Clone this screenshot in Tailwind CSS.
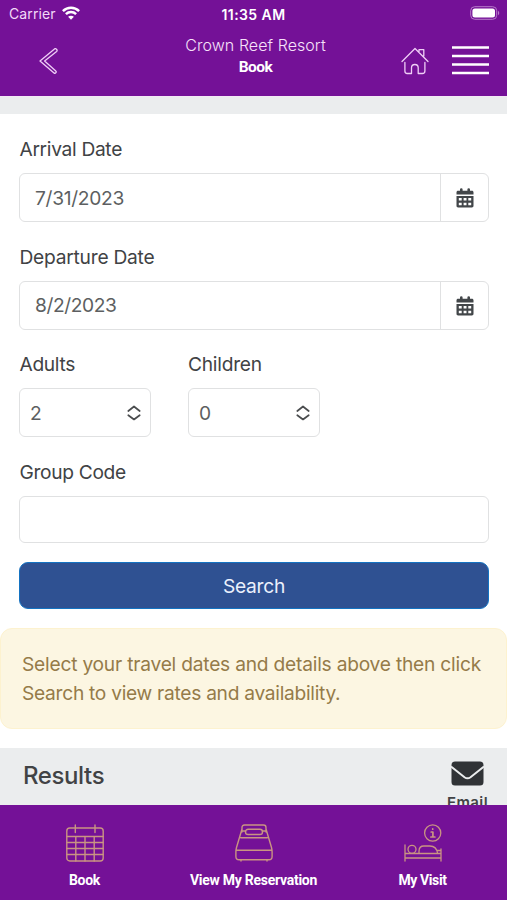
<!DOCTYPE html>
<html lang="en">
<head>
<meta charset="utf-8">
<title>Crown Reef Resort - Book</title>
<script src="https://cdn.jsdelivr.net/npm/@tailwindcss/browser@4"></script>
</head>
<body class="h-[900px] w-[507px] overflow-hidden bg-white font-['Inter',sans-serif] text-[#414345]">
<div class="flex h-[900px] flex-col whitespace-nowrap">
  <header class="h-[96px] shrink-0 bg-[#741197] text-white">
    <div class="grid h-7 grid-cols-3 items-center pr-[7px] pl-[9px]">
      <div class="flex items-center gap-[6px] text-[14px] leading-7 text-[#f3daf8]">
        <span class="tracking-[0.12px]">Carrier</span>
        <svg class="-mt-[2px] h-[14px] w-[18px]" viewBox="0 0 18 14" fill="none" stroke="#fff" stroke-width="2.5"><path d="M.9 5.200C5.500.7 12.500.7 17.100 5.200M3.900 8.200c2.900-2.800 7.300-2.800 10.200 0"/><path d="M9 13.800 6.100 10.800c1.600-1.500 4.200-1.500 5.800 0z" fill="#fff" stroke="none"/></svg>
      </div>
      <div class="pr-[2px] text-center text-[14px] font-semibold tracking-[0.43px]">11:35 AM</div>
      <div class="flex justify-end">
        <svg class="-mt-[2px] h-[14px] w-[30px]" viewBox="0 0 30 14"><rect x=".7" y=".7" width="26" height="12.600" rx="4" fill="none" stroke="#b77bca"/><rect x="2.400" y="2.400" width="22.600" height="9.200" rx="2.500" fill="#fff"/><path d="M28 4.800c1.700.7 1.700 3.700 0 4.400z" fill="#b77bca"/></svg>
      </div>
    </div>
    <div class="grid h-[68px] grid-cols-[1fr_150px_1fr]">
      <div class="pt-[20px] pl-[39px]">
        <svg class="h-[26px] w-[19px]" viewBox="0 0 19 26" fill="none" stroke="#efcef6" stroke-width="1.300" stroke-linejoin="round"><path d="M15.500.9 1 13l14 11.900c.6.500 1.400.4 1.900-.2s.4-1.400-.1-1.800L5.600 13l12-9.500c.6-.5.6-1.300.1-2s-1.600-1-2.200-.6Z"/></svg>
      </div>
      <div class="pt-[7px] pl-1 text-center">
        <div class="text-[16px] leading-5 font-light tracking-[0.06px] text-[#f6e2fa]">Crown Reef Resort</div>
        <div class="pt-px font-['Roboto',sans-serif] text-[15.500px] leading-[22px] font-bold tracking-[-0.55px]">Book</div>
      </div>
      <div class="flex justify-end gap-[23px] pt-[18px] pr-[18px]">
        <svg class="mt-[1px] h-[28px] w-[28px]" viewBox="0 0 28 28" fill="none" stroke="#efcef6" stroke-width="1.300" stroke-linecap="round" stroke-linejoin="round"><path d="M1 14.500 14 1.500l13 13M18 4.500V2.600h4.800v6.500M3.900 15.500V24c0 1.600.7 2.500 2.300 2.500h4.300v-5.800c0-4.300 6.700-4.300 6.700 0v5.800h4.300c1.600 0 2.400-.9 2.400-2.500v-8.500"/></svg>
        <svg class="h-[30px] w-[37px]" viewBox="0 0 37 30" stroke="#fff" stroke-width="2.400"><path d="M0 1.500h37M0 10h37M0 18.500h37M0 27h37"/></svg>
      </div>
    </div>
  </header>
  <div class="h-[18px] shrink-0 border-t border-[#f3e8f5] bg-[#ebedee]"></div>

  <main class="flex min-h-0 flex-1 flex-col">
    <form class="pt-[21px] pr-[18px] pl-[19px] text-[19.200px]">
      <label class="block h-[38px] pl-[0.500px] leading-[29px] tracking-[-0.32px]">Arrival Date</label>
      <div class="flex h-[49px] rounded-[6px] border-[1.500px] border-[#e0e1e2] text-[#5d5f61]">
        <div class="flex-1 pl-[15px] leading-[48px] tracking-[-0.3px]">7/31/2023</div>
        <div class="flex w-[48px] items-center justify-center border-l border-[#e0e1e2]"><svg class="h-5 w-[18px]" viewBox="0 0 18 20"><path fill="#424649" d="M4 1.500a1.300 1.300 0 0 1 2.600 0v1.300h4.800V1.500a1.300 1.300 0 0 1 2.600 0v1.300h1.900c1 0 1.600.7 1.600 1.600v2.100H.5V4.400c0-.9.600-1.600 1.600-1.600H4zM.5 7.900h17v9.900c0 1-.6 1.700-1.600 1.700H2.100c-1 0-1.600-.7-1.600-1.700z"/><path fill="#fff" d="M2.800 9.900h2.900v2.500H2.800zm4.800 0h2.900v2.500H7.600zm4.700 0h2.900v2.500h-2.900zM2.800 14.800h2.900v2.500H2.800zm4.800 0h2.900v2.500H7.600zm4.700 0h2.900v2.500h-2.900z"/></svg></div>
      </div>
      <label class="mt-[20px] block h-[39px] pl-[0.500px] leading-[30px] tracking-[-0.24px]">Departure Date</label>
      <div class="flex h-[49px] rounded-[6px] border-[1.500px] border-[#e0e1e2] text-[#5d5f61]">
        <div class="flex-1 pl-[15px] leading-[47px] tracking-[-0.4px]">8/2/2023</div>
        <div class="flex w-[48px] items-center justify-center border-l border-[#e0e1e2]"><svg class="h-5 w-[18px]" viewBox="0 0 18 20"><path fill="#424649" d="M4 1.500a1.300 1.300 0 0 1 2.600 0v1.300h4.800V1.500a1.300 1.300 0 0 1 2.600 0v1.300h1.900c1 0 1.600.7 1.600 1.600v2.100H.5V4.400c0-.9.600-1.600 1.600-1.600H4zM.5 7.900h17v9.900c0 1-.6 1.700-1.600 1.700H2.100c-1 0-1.600-.7-1.600-1.700z"/><path fill="#fff" d="M2.800 9.900h2.900v2.500H2.800zm4.800 0h2.900v2.500H7.600zm4.700 0h2.900v2.500h-2.900zM2.800 14.800h2.900v2.500H2.800zm4.800 0h2.900v2.500H7.600zm4.700 0h2.900v2.500h-2.900z"/></svg></div>
      </div>
      <div class="mt-[19px] grid grid-cols-[132px_132px] gap-[37px]">
        <div>
          <label class="block h-[39px] pl-[0.500px] leading-[30px] tracking-[-0.32px]">Adults</label>
          <div class="flex h-[49px] items-center justify-between rounded-[6px] border-[1.500px] border-[#e0e1e2] pr-[9px] pl-[10px] text-[#5d5f61]"><span class="pt-[2px]">2</span><svg class="h-4 w-[14px]" viewBox="0 0 14 16" fill="none" stroke="#4b4d4f" stroke-width="1.700" stroke-linecap="round" stroke-linejoin="round"><path d="m1.300 6 5.700-4.500L12.700 6M1.300 10.200 7 14.500l5.700-4.300"/></svg></div>
        </div>
        <div>
          <label class="block h-[39px] leading-[30px] tracking-[-0.25px]">Children</label>
          <div class="flex h-[49px] items-center justify-between rounded-[6px] border-[1.500px] border-[#e0e1e2] pr-[9px] pl-[10px] text-[#5d5f61]"><span class="pt-[2px]">0</span><svg class="h-4 w-[14px]" viewBox="0 0 14 16" fill="none" stroke="#4b4d4f" stroke-width="1.700" stroke-linecap="round" stroke-linejoin="round"><path d="m1.300 6 5.700-4.500L12.700 6M1.300 10.200 7 14.500l5.700-4.300"/></svg></div>
        </div>
      </div>
      <label class="mt-[20px] block h-[39px] pl-[0.500px] leading-[30px] tracking-[-0.33px]">Group Code</label>
      <div class="h-[47px] rounded-[6px] border-[1.500px] border-[#e0e1e2]"></div>
      <div class="mt-[18.500px] h-[47px] rounded-[9px] border border-[#1473c2] bg-[#2f5192] text-center leading-[46px] tracking-[-0.25px] text-[#eaf0fc]">Search</div>
    </form>
    <div class="mt-[19px] h-[101px] shrink-0 rounded-[12px] border border-[#fdf2cf] bg-[#fcf6e2] pt-[21px] pl-[21px] text-[19.200px] leading-[29px] text-[#957b49]">
      <p class="tracking-[-0.225px]">Select your travel dates and details above then click</p>
      <p class="tracking-[-0.29px]">Search to view rates and availability.</p>
    </div>
    <section class="mt-[19.500px] flex h-[57px] shrink-0 justify-between overflow-hidden bg-[#ebedee] pr-[19px] pl-[23px]">
      <h2 class="pt-[10px] text-[24px] leading-[36px] font-medium tracking-[-0.4px]">Results</h2>
      <div class="flex flex-col items-center">
        <svg class="mt-[13px] h-[25px] w-[33px] shrink-0" viewBox="0 0 33 25"><path fill="#303336" d="M4 .5h25a3.500 3.500 0 0 1 3.500 3.500v17a3.500 3.500 0 0 1-3.500 3.500H4A3.500 3.500 0 0 1 .5 21V4A3.500 3.500 0 0 1 4 .5Z"/><path d="M0 5.600 13.500 16.200c1.900 1.400 4.100 1.400 6 0L33 5.600" fill="none" stroke="#ebedee" stroke-width="2"/></svg>
        <span class="mt-[7px] text-[15px] leading-5 font-semibold tracking-[0.4px]">Email</span>
      </div>
    </section>
  </main>

  <nav class="grid h-[95px] shrink-0 grid-cols-3 bg-[#741197] pt-[19px] text-center font-['Roboto',sans-serif] text-[14px] leading-5 font-bold text-white">
    <div class="flex flex-col items-center gap-[8px]">
      <svg class="h-[38px] w-[38px]" viewBox="0 0 38 38" fill="none" stroke="#c99482" stroke-width="1.400" stroke-linecap="round"><rect x=".8" y="4" width="36.400" height="33" rx="3"/><path d="M9.300 1v7.500M29 1v7.500M1 12.500h36M1 18.500h36M1 24.500h36M1 30.500h36M9.800 12.500V37M19 12.500V37M28.200 12.500V37"/></svg>
      <span class="tracking-[-0.3px]">Book</span>
    </div>
    <div class="flex flex-col items-center gap-[8px]">
      <svg class="h-[38px] w-[38px]" viewBox="0 0 38 38" fill="none" stroke="#c99482" stroke-width="1.400" stroke-linecap="round" stroke-linejoin="round"><path d="M7 8V3.500C7 1.900 7.800 1 9.500 1h19C30.200 1 31 1.900 31 3.500V8M7 5 1.500 23.500C1 25.500.9 26 .9 28v4.500c0 2 1.200 3.300 3.200 3.300h29.800c2 0 3.200-1.300 3.200-3.300V28c0-2-.1-2.500-.6-4.500L31 5M1.200 26.300h35.600M5.700 13.700h26.600M6 36v1M32 36v1"/><rect x="10.500" y="5.300" width="17" height="5.200" rx="2.600"/><path d="M7 7h3.500M27.500 7H31"/></svg>
      <span class="tracking-[-0.26px]">View My Reservation</span>
    </div>
    <div class="flex flex-col items-center gap-[8px]">
      <svg class="h-[38px] w-[38px]" viewBox="0 0 38 38" fill="none" stroke="#c99482" stroke-width="1.300" stroke-linecap="round" stroke-linejoin="round"><circle cx="28.700" cy="9" r="8.100"/><path d="M27.200 8h1.700v5M26.900 13h4M28.700 4.900v.3" stroke-width="1.700"/><path d="M1 21v16M37 25v12M1 29.500h36M1 34h36M15 29.500v-2.200c0-3.300 1.700-5.300 4.800-5.300h6c4.300 0 7.200 3 7.800 7.500M33 26.500h4"/><circle cx="8" cy="25.300" r="4"/></svg>
      <span class="tracking-[-0.4px]">My Visit</span>
    </div>
  </nav>
</div>
</body>
</html>
